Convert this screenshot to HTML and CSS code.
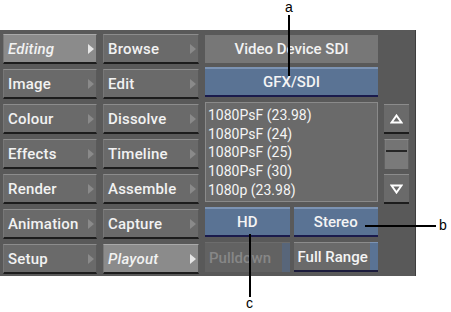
FILE: index.html
```html
<!DOCTYPE html>
<html lang="en">
<head>
    <meta charset="UTF-8">
    <title>Playout Video Device</title>
    <link rel="stylesheet" href="styles.css">
</head>
<body>
    <div class="figure">
        <div class="panel">
            <div class="menu-col">
                <div class="menu-btn selected"><span>Editing</span><i class="arrow"></i></div>
                <div class="menu-btn"><span>Image</span><i class="arrow"></i></div>
                <div class="menu-btn"><span>Colour</span><i class="arrow"></i></div>
                <div class="menu-btn"><span>Effects</span><i class="arrow"></i></div>
                <div class="menu-btn"><span>Render</span><i class="arrow"></i></div>
                <div class="menu-btn"><span>Animation</span><i class="arrow"></i></div>
                <div class="menu-btn"><span>Setup</span><i class="arrow"></i></div>
            </div>
            <div class="menu-col wide">
                <div class="menu-btn"><span>Browse</span><i class="arrow"></i></div>
                <div class="menu-btn"><span>Edit</span><i class="arrow"></i></div>
                <div class="menu-btn"><span>Dissolve</span><i class="arrow"></i></div>
                <div class="menu-btn"><span>Timeline</span><i class="arrow"></i></div>
                <div class="menu-btn"><span>Assemble</span><i class="arrow"></i></div>
                <div class="menu-btn"><span>Capture</span><i class="arrow"></i></div>
                <div class="menu-btn selected"><span>Playout</span><i class="arrow"></i></div>
            </div>
            <div class="device-col">
                <div class="device-title">Video Device SDI</div>
                <div class="blue-btn">GFX/SDI</div>
                <div class="format-list">
                    <div>1080PsF (23.98)</div>
                    <div>1080PsF (24)</div>
                    <div>1080PsF (25)</div>
                    <div>1080PsF (30)</div>
                    <div>1080p (23.98)</div>
                </div>
                <div class="pair">
                    <div class="blue-btn">HD</div>
                    <div class="blue-btn">Stereo</div>
                </div>
                <div class="pair">
                    <div class="toggle disabled"><span>Pulldown</span><i class="lamp"></i></div>
                    <div class="toggle on"><span>Full Range</span><i class="lamp"></i></div>
                </div>
            </div>
            <div class="scroll-col">
                <div class="scroll-btn">
                    <svg width="13" height="10" viewBox="0 0 13 10"><polygon points="6.5,1.5 11.5,8.5 1.5,8.5" fill="none" stroke="#fff" stroke-width="2"/></svg>
                </div>
                <div class="slider"><div class="thumb"></div></div>
                <div class="scroll-btn">
                    <svg width="13" height="10" viewBox="0 0 13 10"><polygon points="1.5,1.5 11.5,1.5 6.5,8.5" fill="none" stroke="#fff" stroke-width="2"/></svg>
                </div>
            </div>
        </div>

        <!-- callouts -->
        <span class="callout-label label-a">a</span>
        <span class="callout-line line-a"></span>
        <span class="callout-line line-b"></span>
        <span class="callout-label label-b">b</span>
        <span class="callout-line line-c"></span>
        <span class="callout-label label-c">c</span>
    </div>
</body>
</html>
```

FILE: styles.css
```css
body {
    margin: 0;
    background-color: white;
    font-family: Roboto, "Liberation Sans", sans-serif;
}
.figure {
    position: relative;
    width: 451px;
    height: 312px;
    box-sizing: border-box;
    padding-top: 30px;
    overflow: hidden;
}
.panel {
    width: 416px;
    height: 246px;
    box-sizing: border-box;
    padding: 4px 0 0 3px;
    background-color: #595959;
    border-right: 1px solid #3e3e3e;
    display: flex;
    gap: 6px;
}
.menu-col {
    width: 94px;
    display: flex;
    flex-direction: column;
    gap: 5px;
}
.menu-col.wide {
    width: 96px;
}
.menu-btn {
    height: 30px;
    box-sizing: border-box;
    display: flex;
    align-items: center;
    padding: 0 2px 0 4px;
    background-color: #6a6a6a;
    border-top: 1px solid #8c8c8c;
    border-left: 1px solid #777;
    border-right: 1px solid #5a5a5a;
    border-bottom: 2px solid #1c1c1c;
    color: #f2f2f2;
    font-size: 15px;
    font-weight: 500;
    letter-spacing: 0.2px;
}
.menu-btn .arrow {
    margin-left: auto;
    width: 0;
    height: 0;
    border-left: 6px solid #8a8a8a;
    border-top: 5px solid transparent;
    border-bottom: 5px solid transparent;
}
.menu-btn.selected {
    background-color: #8b8b8b;
    border-top-color: #a9a9a9;
    font-style: italic;
}
.menu-btn.selected .arrow {
    border-left-color: #e6e6e6;
}
.device-col {
    width: 173px;
    display: flex;
    flex-direction: column;
    gap: 5px;
}
.device-title {
    height: 28px;
    margin-top: 1px;
    margin-bottom: -1px;
    display: flex;
    align-items: center;
    justify-content: center;
    background-color: #777;
    color: #f2f2f2;
    font-size: 15px;
    font-weight: 500;
}
.blue-btn {
    height: 30px;
    box-sizing: border-box;
    display: flex;
    align-items: center;
    justify-content: center;
    background-color: #5a7394;
    border-top: 2px solid #7c93b3;
    border-bottom: 2px solid #1b1b4c;
    color: #f4f4f4;
    font-size: 15px;
    font-weight: 500;
}
.format-list {
    height: 100px;
    box-sizing: border-box;
    padding: 3px 0 0 2px;
    background-color: #6a6a6a;
    border: 1px solid #8a8a8a;
    color: #f4f4f4;
    font-size: 14px;
    line-height: 18.7px;
}
.pair {
    display: flex;
    gap: 4px;
}
.pair > div {
    flex: 1;
}
.toggle {
    height: 30px;
    box-sizing: border-box;
    display: flex;
    align-items: stretch;
    font-size: 15px;
    font-weight: 500;
}
.toggle span {
    flex: 1;
    display: flex;
    align-items: center;
    padding-left: 4px;
}
.toggle .lamp {
    width: 8px;
}
.toggle.disabled {
    background-color: #626262;
    border-top: 1px solid #6c6c6c;
    color: #878787;
}
.toggle.disabled .lamp {
    background-color: #58667a;
}
.toggle.on {
    background-color: #6a6a6a;
    border-top: 1px solid #8c8c8c;
    border-bottom: 2px solid #1b1b3c;
    color: #f4f4f4;
}
.toggle.on .lamp {
    background-color: #5a7394;
    border-top: 1px solid #7c93b3;
    margin-top: -1px;
}
.scroll-col {
    width: 25px;
    margin-top: 70px;
    display: flex;
    flex-direction: column;
    gap: 5px;
}
.scroll-btn {
    height: 30px;
    box-sizing: border-box;
    display: flex;
    align-items: center;
    justify-content: center;
    background-color: #6a6a6a;
    border-top: 1px solid #8c8c8c;
    border-bottom: 2px solid #1c1c1c;
}
.slider {
    height: 30px;
    box-sizing: border-box;
    background-color: #7a7a7a;
    border-top: 1px solid #8e8e8e;
    border-left: 1px solid #626262;
    border-right: 1px solid #626262;
}
.thumb {
    height: 12px;
    box-sizing: border-box;
    margin: 0 1px;
    border-bottom: 2px solid #262626;
    background-color: #747474;
}
.callout-label {
    position: absolute;
    font-family: "Liberation Sans", Arial, sans-serif;
    font-size: 14px;
    line-height: 16px;
    color: black;
}
.callout-line {
    position: absolute;
    background-color: black;
}
.label-a {
    left: 285px;
    top: -1px;
}
.line-a {
    left: 288px;
    top: 15px;
    width: 2px;
    height: 61px;
}
.line-b {
    left: 365px;
    top: 225px;
    width: 71px;
    height: 2px;
}
.label-b {
    left: 439px;
    top: 217px;
}
.line-c {
    left: 249px;
    top: 234px;
    width: 2px;
    height: 63px;
}
.label-c {
    left: 246px;
    top: 295px;
}
```
